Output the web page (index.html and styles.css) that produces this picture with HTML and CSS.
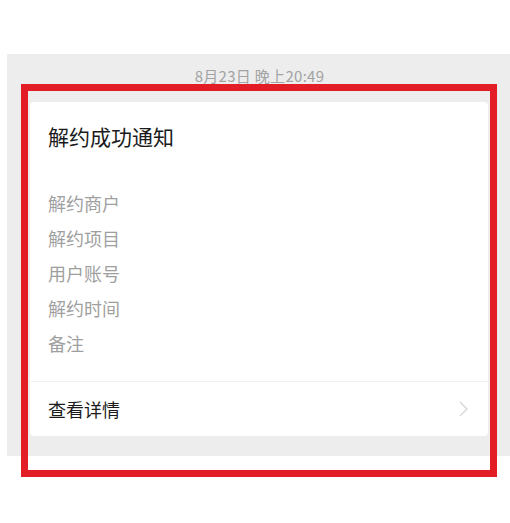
FILE: index.html
```html
<!DOCTYPE html>
<html lang="zh-CN">
<head>
    <meta charset="UTF-8">
    <title>解约成功通知</title>
    <link rel="stylesheet" href="styles.css">
</head>
<body>
<div class="page">
    <div class="chat">
        <div class="time">8月23日 晚上20:49</div>
        <div class="card">
            <div class="title">解约成功通知</div>
            <ul class="fields">
                <li>解约商户</li>
                <li>解约项目</li>
                <li>用户账号</li>
                <li>解约时间</li>
                <li>备注</li>
            </ul>
            <div class="more">
                <span>查看详情</span>
                <svg class="arrow" width="9" height="16" viewBox="0 0 9 16">
                    <path d="M1 1 L8 8 L1 15" fill="none" stroke="#d9d9d9" stroke-width="1.5"/>
                </svg>
            </div>
        </div>
    </div>
    <div class="mark"></div>
</div>
</body>
</html>
```

FILE: styles.css
```css
*{
    margin: 0;
    padding: 0;
    list-style: none;
    box-sizing: border-box;
}
body{
    background: #fff;
    font-family: "Noto Sans CJK SC", "Noto Sans", sans-serif;
}
.page{
    position: relative;
    height: 523px;
    padding-top: 54px;
}
.chat{
    margin-left: 7px;
    height: 402px;
    background: #ededed;
    padding-top: 12px;
}
.time{
    text-align: center;
    font-size: 15px;
    line-height: 20px;
    color: #a3a3a3;
    letter-spacing: 0.3px;
    padding-left: 2px;
}
.card{
    margin: 16px 0 0 23px;
    width: 458px;
    background: #fff;
    border-radius: 4px;
}
.title{
    padding: 20px 0 0 18px;
    font-size: 21px;
    line-height: 28px;
    color: #1b1b1b;
}
.fields{
    margin-top: 36px;
    padding-left: 18px;
    padding-bottom: 20px;
    border-bottom: 1px solid #f0f0f0;
}
.fields li{
    font-size: 18px;
    line-height: 35px;
    color: #9f9f9f;
}
.more{
    display: flex;
    justify-content: space-between;
    align-items: center;
    height: 54px;
    padding: 0 20px 0 18px;
    font-size: 18px;
    color: #1b1b1b;
}
.mark{
    position: absolute;
    left: 21px;
    top: 84px;
    width: 476px;
    height: 393px;
    border: 7px solid #e21d26;
}
```
